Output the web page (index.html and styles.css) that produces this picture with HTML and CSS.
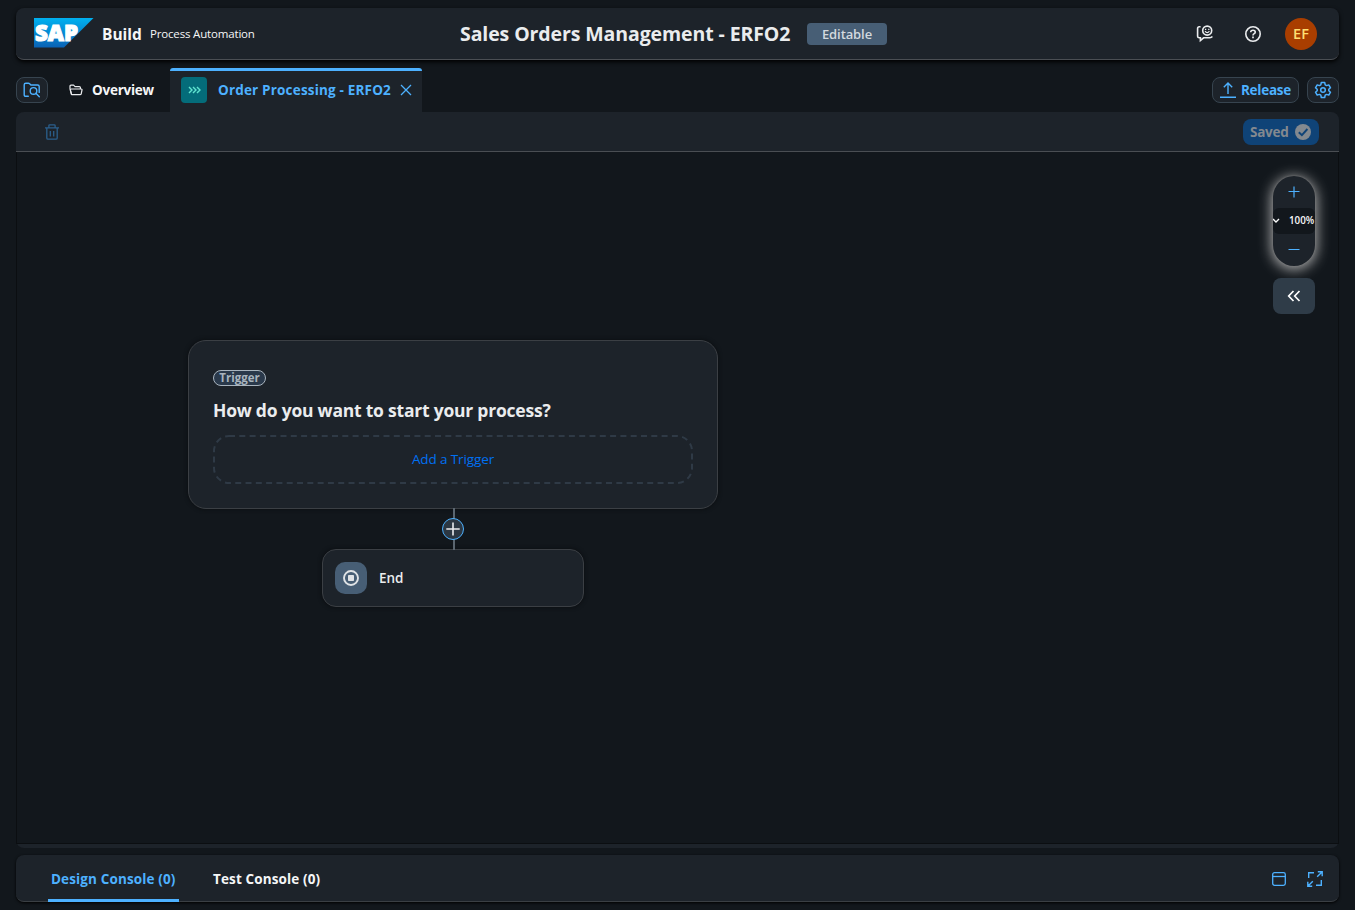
FILE: index.html
```html
<!DOCTYPE html>
<html lang="en">
<head>
<meta charset="utf-8">
<title>Sales Orders Management - ERFO2</title>
<link rel="stylesheet" href="styles.css">
</head>
<body>
<header class="shell">
  <div class="brand">
    <svg class="logo" width="60" height="30" viewBox="0 0 60 30">
      <defs><linearGradient id="sky" x1="0" y1="0" x2="0" y2="1"><stop offset="0" stop-color="#00b1f0"/><stop offset="1" stop-color="#0a62b5"/></linearGradient></defs>
      <path d="M0 0H59.5L30 29.5H0Z" fill="url(#sky)"/>
      <text x="1" y="23.3" class="logo-text" textLength="43" lengthAdjust="spacingAndGlyphs">SAP</text>
    </svg>
    <span class="product">Build</span>
    <span class="sub">Process Automation</span>
  </div>
  <div class="heading">
    <h1 class="title">Sales Orders Management - ERFO2</h1>
    <span class="tag">Editable</span>
  </div>
  <div class="tools">
    <svg class="tool" width="18" height="18" viewBox="0 0 18 18" fill="none" stroke="#eaecee" stroke-width="1.6">
      <path d="M4.6 1.8H3.2Q1.6 1.8 1.6 3.4V11.2Q1.6 12.8 3.2 12.8H4.4V15.6L7.6 12.8H13.8Q15.4 12.8 16.4 11.6"/>
      <circle cx="11.2" cy="5.6" r="4.5"/>
      <path d="M9 6.2Q11.2 9 13.4 6.2" stroke-width="1.2"/><path d="M9.6 3.7V5.1M12.8 3.7V5.1" stroke-width="1.3"/>
    </svg>
    <svg class="tool" width="18" height="18" viewBox="0 0 18 18" fill="none" stroke="#eaecee" stroke-width="1.6">
      <circle cx="9" cy="9" r="7.2"/><path d="M6.7 7.2Q6.8 5.2 9 5.2T11.3 7.1Q11.3 8.2 10 8.8Q9 9.2 9 10.4"/><path d="M9 11.6V13.2" stroke-width="1.7"/>
    </svg>
    <span class="avatar">EF</span>
  </div>
</header>

<nav class="tabs">
  <button class="btn square">
    <svg width="18" height="18" viewBox="0 0 18 18" fill="none" stroke="#4db1ff" stroke-width="1.4" stroke-linecap="round" stroke-linejoin="round">
      <path d="M5.3 15.3H2.8Q1.2 15.3 1.2 13.7V3.8Q1.2 2.2 2.8 2.2H5.4Q6.1 2.2 6.6 2.7L7.9 4H14.6Q16.2 4 16.2 5.6V11.4"/>
      <circle cx="10.5" cy="9.9" r="3.3"/><path d="M12.9 12.3L16.3 15.7"/>
    </svg>
  </button>
  <div class="tab">
    <svg width="14" height="12" viewBox="0 0 14 12" fill="none" stroke="#eaecee" stroke-width="1.2" stroke-linejoin="round">
      <path d="M2.5 10.6L1 4.6V2.2Q1 1.2 2 1.2H4.6L6 2.6H10.4Q11.4 2.6 11.4 3.6V4.9"/><path d="M2.6 10.7L1.4 6.2Q1.2 5.1 2.4 5H12.2Q13.2 5.1 13 6L12.2 9.8Q12 10.7 11 10.7Z"/>
    </svg>
    <span class="t-over">Overview</span>
  </div>
  <div class="tab current">
    <span class="proc">
      <svg width="13" height="8" viewBox="0 0 13 8" fill="none" stroke="#5fe3d0" stroke-width="1.4"><path d="M1 .9L4 4L1 7.1M5 .9L8 4L5 7.1M9 .9L12 4L9 7.1"/></svg>
    </span>
    <span class="t-order">Order Processing - ERFO2</span>
    <svg class="close" width="12" height="12" viewBox="0 0 12 12" stroke="#4db1ff" stroke-width="1.3"><path d="M1 1L11 11M11 1L1 11"/></svg>
  </div>
  <div class="tab-actions">
    <button class="btn release">
      <svg width="16" height="16" viewBox="0 0 16 16" fill="none" stroke="#4db1ff" stroke-width="1.4"><path d="M8 12V1.2M3.8 5.2L8 1L12.2 5.2M0 15.2H16"/></svg>
      <span class="t-release">Release</span>
    </button>
    <button class="btn square">
      <svg width="18" height="18" viewBox="0 0 18 18" fill="none" stroke="#4db1ff" stroke-width="1.5" stroke-linejoin="round">
        <circle cx="9" cy="9" r="2.3"/>
        <path d="M7.3 1.5H10.7L11.2 3.8L12.6 4.6L14.8 3.9L16.5 6.8L14.8 8.3V9.7L16.5 11.2L14.8 14.1L12.6 13.4L11.2 14.2L10.7 16.5H7.3L6.8 14.2L5.4 13.4L3.2 14.1L1.5 11.2L3.2 9.7V8.3L1.5 6.8L3.2 3.9L5.4 4.6L6.8 3.8Z"/>
      </svg>
    </button>
  </div>
</nav>

<main class="editor">
  <div class="bar">
    <svg width="14" height="16" viewBox="0 0 14 16" fill="none" stroke="#2b5f8c" stroke-width="1.3"><path d="M0 3.9H14M3.9 3.6V1.6Q3.9 .8 4.7 .8H9.3Q10.1 .8 10.1 1.6V3.6M1.8 4V14Q1.8 15.2 3 15.2H11Q12.2 15.2 12.2 14V4M5.3 7V12.6M8.7 7V12.6"/></svg>
    <span class="saved"><span class="t-saved">Saved</span>
      <svg width="16" height="16" viewBox="0 0 16 16"><circle cx="8" cy="8" r="8" fill="#83898f"/><path d="M3.8 8.2L6.9 11.2L12.4 5" fill="none" stroke="#0f4377" stroke-width="1.9"/></svg>
    </span>
  </div>
  <div class="canvas">
    <section class="node start">
      <span class="badge">Trigger</span>
      <h2 class="question">How do you want to start your process?</h2>
      <div class="drop">
        <svg class="dash" width="480" height="49" viewBox="0 0 480 49"><rect x="1" y="1" width="478" height="47" rx="15" fill="none" stroke="#2f3a46" stroke-width="2" stroke-dasharray="6 4.3"/></svg>
        <a class="add">Add a Trigger</a>
      </div>
    </section>
    <span class="wire"></span>
    <span class="plus"><svg width="14" height="14" viewBox="0 0 14 14" stroke="#eaecee" stroke-width="1.6"><path d="M7 .5V13.5M.3 7H13.7"/></svg></span>
    <section class="node end">
      <span class="stop"><svg width="16" height="16" viewBox="0 0 16 16"><circle cx="8" cy="8" r="7" fill="none" stroke="#e0e3e6" stroke-width="1.9"/><rect x="5" y="5" width="6" height="6" rx=".8" fill="#e0e3e6"/></svg></span>
      <span class="t-end">End</span>
    </section>
    <div class="zoom">
      <svg class="zin" width="12" height="12" viewBox="0 0 12 12" stroke="#4db1ff" stroke-width="1.2"><path d="M6 .5V11.5M.5 5.5H11.5"/></svg>
      <div class="level"><svg class="chev" width="8" height="6" viewBox="0 0 8 6" fill="none" stroke="#fff" stroke-width="1.4"><path d="M1 1L4 4L7 1"/></svg><span class="pct">100%</span></div>
      <svg class="zout" width="12" height="2" viewBox="0 0 12 2" stroke="#4db1ff" stroke-width="1"><path d="M.5 1.5H11.5"/></svg>
    </div>
    <button class="collapse"><svg width="14" height="12" viewBox="0 0 14 12" fill="none" stroke="#fff" stroke-width="1.7"><path d="M6.5 1L1.7 6L6.5 11M12.5 1L7.7 6L12.5 11"/></svg></button>
  </div>
</main>

<footer class="console">
  <div class="ctab active"><span class="t-design">Design Console (0)</span></div>
  <div class="ctab"><span class="t-test">Test Console (0)</span></div>
  <div class="cicons">
    <svg width="14" height="14" viewBox="0 0 14 14" fill="none" stroke="#4db1ff" stroke-width="1.3"><rect x=".7" y=".7" width="12.6" height="12.6" rx="1.8"/><path d="M.7 4.5H13.3"/></svg>
    <svg width="16" height="16" viewBox="0 0 16 16" fill="none" stroke="#4db1ff" stroke-width="1.4"><path d="M1.7 6.9V1.7H7M14.3 9V14.3H9M10.2 5.8L15 1M10.8 .8H15.2V5.2M5.8 10.2L1 15M.8 10.8V15.2H5.2"/></svg>
  </div>
</footer>
</body>
</html>
```
FILE: styles.css
```css
* { box-sizing: border-box; }
body {
  margin: 0; width: 1355px; height: 910px; overflow: hidden;
  background: #12171c; color: #f5f6f7;
  font: 700 13.5px/20px "Open Sans", "Noto Sans", sans-serif;
  display: flex; flex-direction: column; padding: 8px 16px 0;
  white-space: nowrap;
}
svg { display: block; flex: none; overflow: visible; }
button { margin: 0; padding: 0; font: inherit; color: #4db1ff; }
h1, h2 { margin: 0; font-weight: 700; }

.shell {
  flex: none; height: 52px; display: flex; align-items: center;
  background: #1d232a; border-radius: 8px; border-bottom: 1px solid #4a4e53;
  box-shadow: 0 2px 4px #000; padding: 0 22px 0 18px;
}
.brand { display: flex; align-items: center; width: 426px; }
.logo { margin-top: -2px; }
.logo-text { font: 800 23px "Open Sans", sans-serif; fill: #fff; stroke: #fff; stroke-width: 1.2px; }
.product { font-size: 15.5px; margin-left: 8px; width: 48px; }
.sub { font-size: 11.5px; font-weight: 400; letter-spacing: -.17px; }
.heading { display: flex; align-items: center; }
.title { font-size: 19.5px; line-height: 28px; width: 347px; color: #eaecee; letter-spacing: -.1px; }
.tag {
  width: 80px; height: 22px; line-height: 22px; border-radius: 4px; text-align: center;
  background: #475e75; color: #d3d9df; font-size: 13px; font-weight: 600; letter-spacing: -.1px;
}
.tools { margin-left: auto; display: flex; align-items: center; gap: 30px; }
.avatar {
  width: 32px; height: 32px; line-height: 32px; border-radius: 50%; margin-left: -7px;
  background: #a93e00; color: #ffdf72; text-align: center; font-size: 14.5px; font-weight: 600;
}

.tabs { flex: none; height: 52px; padding-top: 8px; display: flex; align-items: center; }
.btn {
  height: 26px; border: 1px solid #37444f; border-radius: 8px; background: #1d232a;
  display: flex; align-items: center; justify-content: center;
}
.square { width: 32px; }
.tab { display: flex; align-items: center; height: 44px; padding-left: 21px; gap: 9px; width: 122px; }
.t-over, .t-release, .t-saved { letter-spacing: -.25px; }
.current {
  width: 252px; padding-left: 11px; gap: 0; background: #1d232a;
  border-top: 3px solid #4db1ff; border-radius: 3px 3px 0 0; color: #4db1ff; padding-bottom: 3px;
}
.proc {
  width: 26px; height: 26px; border-radius: 4px; background: #046c7a; margin-right: 11px;
  display: flex; align-items: center; justify-content: center;
}
.t-order { width: 182px; letter-spacing: .18px; }
.tab-actions { margin-left: auto; display: flex; gap: 8px; }
.release { width: 87px; gap: 5px; }

.editor { flex: none; height: 736px; display: flex; flex-direction: column; background: #1d232a; border-radius: 8px; padding-bottom: 4px; }
.bar {
  flex: none; height: 40px; padding: 0 20px 0 29px; display: flex; align-items: center; justify-content: space-between;
  border-bottom: 1px solid #4a4e53;
}
.saved {
  width: 76px; height: 26px; border-radius: 8px; background: #0f4377; color: #83898f;
  display: flex; align-items: center; justify-content: space-between; padding: 0 8px 0 7px;
}
.canvas { position: relative; flex: 1; background: #12171c; border: solid #0b0e11; border-width: 0 1px 1px; }
.node { position: absolute; background: #1d232a; border: 1px solid #3b3f44; box-shadow: 0 0 4px #0a0d10; }
.start { left: 171px; top: 188px; width: 530px; height: 169px; border-radius: 18px; padding: 29px 24px 0; }
.badge {
  display: block; width: 53px; height: 16px; border: 1px solid #a9b4be; border-radius: 8px; background: #2a394b;
  color: #a9b4be; font-size: 11.5px; line-height: 14px; text-align: center;
}
.question { font-size: 17.5px; line-height: 24px; margin: 12px 0 13px; color: #eaecee; letter-spacing: -.22px; }
.drop { height: 49px; position: relative; display: flex; align-items: center; justify-content: center; }
.dash { position: absolute; left: 0; top: 0; }
.add { color: #0070f2; font-weight: 400; letter-spacing: -.12px; padding-bottom: 1px; }
.wire { position: absolute; left: 436px; top: 356px; width: 2px; height: 42px; background: #5b6670; z-index: 1; }
.plus {
  position: absolute; z-index: 2; left: 425px; top: 366px; width: 22px; height: 22px; border-radius: 50%;
  border: 1px solid #4db1ff; background: #2c3742; display: flex; align-items: center; justify-content: center;
}
.end { left: 305px; top: 397px; width: 262px; height: 58px; border-radius: 14px; padding-left: 12px; display: flex; align-items: center; gap: 12px; }
.stop { width: 32px; height: 32px; border-radius: 10px; background: #475e75; display: flex; align-items: center; justify-content: center; }
.t-end { font-weight: 600; color: #eaecee; padding-bottom: 1px; letter-spacing: -.1px; }
.zoom {
  position: absolute; left: 1256px; top: 24px; width: 42px; height: 90px; border-radius: 21px; background: #1d232a;
  box-shadow: 0 0 2px #777, 0 2px 14px 1px #bbb; overflow: hidden;
  display: flex; flex-direction: column; align-items: center;
}
.zin { margin-top: 10px; }
.level { width: 42px; height: 26px; margin-top: 10px; border-radius: 6px; background: #12171c; display: flex; align-items: center; gap: 9px; }
.chev { margin-left: -1px; }
.pct { font-size: 9.8px; font-weight: 600; }
.zout { margin-top: 14px; }
.collapse {
  position: absolute; left: 1256px; top: 126px; width: 42px; height: 36px; border: 0; border-radius: 8px; background: #2f3c48;
  display: flex; align-items: center; justify-content: center;
}

.console {
  flex: none; height: 47px; margin-top: 7px; background: #1d232a; border-radius: 8px; border-bottom: 1px solid #3a3f44;
  box-shadow: 0 1px 3px #000; display: flex; padding: 0 16px 0 32px;
}
.ctab { width: 131px; height: 47px; padding: 14px 3px 0; margin-right: 31px; letter-spacing: .13px; }
.active { color: #4db1ff; border-bottom: 3px solid #4db1ff; }
.cicons { margin-left: auto; display: flex; align-items: center; gap: 21px; padding-top: 2px; }
```
